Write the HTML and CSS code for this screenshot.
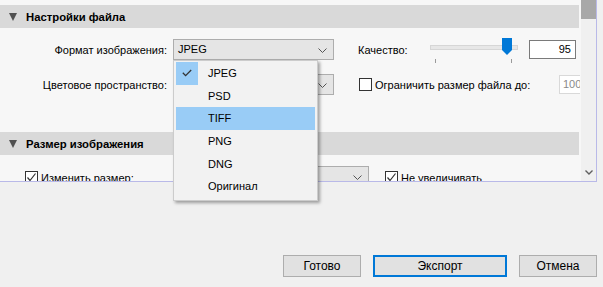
FILE: index.html
```html
<!DOCTYPE html>
<html lang="ru">
<head>
  <meta charset="UTF-8">
  <title>Экспорт</title>
  <link rel="stylesheet" href="styles.css">
</head>
<body>

  <div class="panel">
    <div class="scroll">

      <div class="section-head"><span class="tri"></span>Настройки файла</div>

      <div class="row row-format">
        <span class="lbl">Формат изображения:</span>
        <div class="select sel-format">JPEG
          <svg class="chev" width="9" height="5" viewBox="0 0 9 5"><polyline points="0.5,0.5 4.5,4.5 8.5,0.5" fill="none" stroke="#555" stroke-width="1"/></svg>
        </div>
        <span class="q-label">Качество:</span>
        <div class="slider">
          <div class="track"></div>
          <svg class="thumb" width="10" height="17" viewBox="0 0 10 17"><path d="M0 0H10V12L5 17L0 12Z" fill="#0078d7"/></svg>
          <span class="tick tick-a"></span>
          <span class="tick tick-b"></span>
        </div>
        <div class="num">95</div>
      </div>

      <div class="row row-space">
        <span class="lbl">Цветовое пространство:</span>
        <div class="select sel-format">
          <svg class="chev" width="9" height="5" viewBox="0 0 9 5"><polyline points="0.5,0.5 4.5,4.5 8.5,0.5" fill="none" stroke="#555" stroke-width="1"/></svg>
        </div>
        <span class="box"></span>
        <span class="limit-label">Ограничить размер файла до:</span>
        <div class="num num-off">100</div>
      </div>

      <div class="section-head head-two"><span class="tri"></span>Размер изображения</div>

      <div class="row row-resize">
        <span class="box checked">
          <svg width="11" height="11" viewBox="0 0 11 11"><polyline points="1.5,5.5 4,8.5 9.5,1.5" fill="none" stroke="#333" stroke-width="1.2"/></svg>
        </span>
        <span class="resize-label">Изменить размер:</span>
        <div class="select sel-resize">
          <svg class="chev" width="9" height="5" viewBox="0 0 9 5"><polyline points="0.5,0.5 4.5,4.5 8.5,0.5" fill="none" stroke="#555" stroke-width="1"/></svg>
        </div>
        <span class="box checked box-nozoom">
          <svg width="11" height="11" viewBox="0 0 11 11"><polyline points="1.5,5.5 4,8.5 9.5,1.5" fill="none" stroke="#333" stroke-width="1.2"/></svg>
        </span>
        <span class="nozoom-label">Не увеличивать</span>
      </div>

    </div>
    <div class="scrollbar">
      <div class="sb-thumb"></div>
      <svg class="sb-down" width="8" height="5" viewBox="0 0 8 5"><polyline points="0.5,0.5 4,4 7.5,0.5" fill="none" stroke="#606060" stroke-width="1.4"/></svg>
    </div>
  </div>

  <ul class="dropdown">
    <li class="item"><span class="mark on">
      <svg width="10" height="8" viewBox="0 0 10 8"><polyline points="0.8,3.8 3.6,6.6 9.2,1" fill="none" stroke="#333" stroke-width="1.3"/></svg>
    </span>JPEG</li>
    <li class="item"><span class="mark"></span>PSD</li>
    <li class="item hover"><span class="mark"></span>TIFF</li>
    <li class="item"><span class="mark"></span>PNG</li>
    <li class="item"><span class="mark"></span>DNG</li>
    <li class="item"><span class="mark"></span>Оригинал</li>
  </ul>

  <div class="buttons">
    <button class="btn btn-done">Готово</button>
    <button class="btn btn-export">Экспорт</button>
    <button class="btn btn-cancel">Отмена</button>
  </div>

</body>
</html>
```

FILE: styles.css
```css
body {
  margin: 0;
  padding: 0;
  font-family: 'Liberation Sans', Arial, sans-serif;
  font-size: 11px;
  color: #000;
  background-color: #f0f0f0;
  position: relative;
  height: 287px;
  overflow: hidden;
}

.panel {
  display: flex;
  width: 597px;
  height: 182px;
  box-sizing: border-box;
  border-right: 1px solid #b9b9e8;
  border-bottom: 1px solid #b9b9e8;
  background-color: #f7f7f7;
}

.scroll {
  width: 580px;
  padding-top: 5px;
  overflow: hidden;
  flex-shrink: 0;
}

.section-head {
  display: flex;
  align-items: center;
  width: 579px;
  height: 23px;
  background-color: #d9d9d9;
  font-weight: bold;
  font-size: 11.3px;
}

.tri {
  width: 0;
  height: 0;
  border-left: 4.5px solid transparent;
  border-right: 4.5px solid transparent;
  border-top: 8px solid #505050;
  margin-left: 9px;
  margin-right: 9px;
}

.head-two {
  margin-top: 37px;
}

.row {
  display: flex;
  align-items: center;
  height: 21px;
  white-space: nowrap;
}

.row-format {
  margin-top: 11px;
}

.row-space {
  margin-top: 14px;
}

.row-resize {
  margin-top: 11px;
  align-items: flex-start;
}

.lbl {
  width: 167px;
  text-align: right;
  margin-right: 6px;
  flex-shrink: 0;
}

.select {
  position: relative;
  height: 21px;
  box-sizing: border-box;
  border: 1px solid #adadad;
  background-color: #e5e5e5;
  padding-left: 4px;
  line-height: 19px;
  flex-shrink: 0;
}

.sel-format {
  width: 161px;
}

.sel-resize {
  width: 196px;
}

.chev {
  position: absolute;
  right: 6px;
  top: 8px;
}

.q-label {
  margin-left: 24px;
  width: 72px;
}

.slider {
  position: relative;
  width: 99px;
  height: 21px;
  flex-shrink: 0;
}

.track {
  position: absolute;
  left: 0;
  top: 6px;
  width: 86px;
  height: 3px;
  background-color: #e7e7e7;
  border: 1px solid #d6d6d6;
}

.thumb {
  position: absolute;
  left: 72px;
  top: -1px;
}

.tick {
  position: absolute;
  top: 20px;
  width: 1px;
  height: 4px;
  background-color: #9a9a9a;
}

.tick-a { left: 5px; }
.tick-b { left: 81px; }

.num {
  width: 47px;
  height: 19px;
  box-sizing: border-box;
  border: 1px solid #7a7a7a;
  background-color: #fff;
  text-align: right;
  padding-right: 4px;
  line-height: 17px;
  flex-shrink: 0;
}

.num-off {
  border-color: #d9d9d9;
  color: #8a8a8a;
  text-align: left;
  padding-left: 3px;
  height: 19px;
}

.box {
  display: inline-flex;
  align-items: center;
  justify-content: center;
  width: 13px;
  height: 13px;
  box-sizing: border-box;
  border: 1px solid #333;
  background-color: #fff;
  margin-left: 25px;
  flex-shrink: 0;
}

.limit-label {
  margin-left: 3px;
  width: 184px;
  flex-shrink: 0;
}

.row-resize .box {
  margin-top: 5px;
}

.resize-label {
  margin-left: 3px;
  margin-top: 6px;
  width: 132px;
  flex-shrink: 0;
}

.row-resize .box-nozoom {
  margin-left: 16px;
}

.nozoom-label {
  margin-left: 3px;
  margin-top: 6px;
}

.scrollbar {
  position: relative;
  width: 15px;
  margin-left: 1px;
  background-color: #f0f0f0;
}

.sb-thumb {
  height: 19px;
  background-color: #a8a8a8;
}

.sb-down {
  position: absolute;
  left: 4px;
  top: 170px;
}

.dropdown {
  position: absolute;
  left: 173px;
  top: 60px;
  width: 145px;
  margin: 0;
  padding: 1px 2px 2px 2px;
  box-sizing: border-box;
  list-style: none;
  background-color: #f2f2f2;
  border: 1px solid #cccccc;
  box-shadow: 2px 2px 3px rgba(0, 0, 0, 0.35);
}

.item {
  display: flex;
  align-items: center;
  height: 22.6px;
}

.mark {
  display: flex;
  align-items: center;
  justify-content: center;
  width: 22px;
  height: 100%;
  margin-right: 10px;
}

.mark.on {
  background-color: #99ccf6;
}

.item.hover {
  background-color: #99ccf6;
}

.buttons {
  position: absolute;
  left: 0;
  right: 6px;
  top: 255px;
  display: flex;
  justify-content: flex-end;
  gap: 12px;
}

.btn {
  height: 22px;
  box-sizing: border-box;
  border: 1px solid #adadad;
  background-color: #e1e1e1;
  font-family: 'Liberation Sans', Arial, sans-serif;
  font-size: 12px;
  color: #000;
  padding: 0;
}

.btn-done,
.btn-cancel {
  width: 78px;
}

.btn-export {
  width: 134px;
  border: 2px solid #0078d7;
}
```
